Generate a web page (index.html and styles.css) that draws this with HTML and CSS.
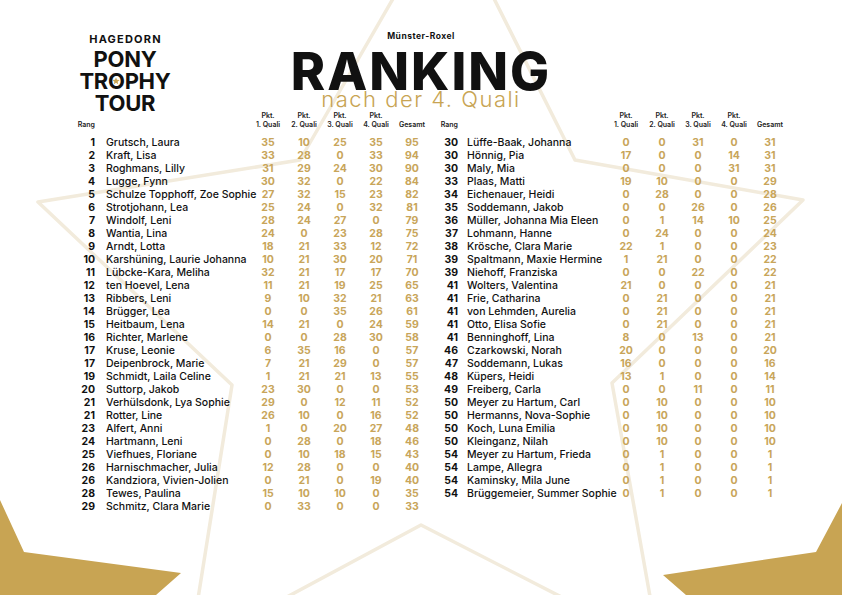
FILE: index.html
```html
<!DOCTYPE html>
<html lang="de">
<head>
<meta charset="utf-8">
<title>Ranking</title>
<link rel="stylesheet" href="styles.css">
</head>
<body>
<div class="page">
  <svg class="bg" viewBox="0 0 842 595" width="842" height="595" aria-hidden="true">
    <polygon class="outline" points="447,-95 575,160 803,200 612,383 659,647 421,525 190,649 232,385 38,202 300,160"/>
    <polygon class="gold" points="0,500 24,552 181,573 156,595 0,595"/>
    <polygon class="gold" points="842,503 816,552 663,575 686,595 842,595"/>
  </svg>

  <header class="header">
    <div class="logo">
      <div class="l1">HAGEDORN</div>
      <div class="l2">PONY</div>
      <div class="l2">TR<span class="o">O<svg class="ostar" viewBox="0 0 20 20"><polygon points="10,1 12.6,7 19,7.4 14,11.6 15.6,18 10,14.5 4.4,18 6,11.6 1,7.4 7.4,7"/></svg></span>PHY</div>
      <div class="l2">TOUR</div>
    </div>
    <div class="title">
      <div class="place">Münster-Roxel</div>
      <h1 class="rank">RANKING</h1>
      <div class="sub">nach der 4. Quali</div>
    </div>
    <div></div>
  </header>

  <main class="tables">
    <section class="tbl left">
      <div class="row head"><span class="rk">Rang</span><span></span><span class="n">Pkt.<br>1. Quali</span><span class="n">Pkt.<br>2. Quali</span><span class="n">Pkt.<br>3. Quali</span><span class="n">Pkt.<br>4. Quali</span><span class="n">Gesamt</span></div>
      <div class="row"><span class="rk">1</span><span class="nm">Grutsch, Laura</span><span class="n">35</span><span class="n">10</span><span class="n">25</span><span class="n">35</span><span class="n">95</span></div>
      <div class="row"><span class="rk">2</span><span class="nm">Kraft, Lisa</span><span class="n">33</span><span class="n">28</span><span class="n">0</span><span class="n">33</span><span class="n">94</span></div>
      <div class="row"><span class="rk">3</span><span class="nm">Roghmans, Lilly</span><span class="n">31</span><span class="n">29</span><span class="n">24</span><span class="n">30</span><span class="n">90</span></div>
      <div class="row"><span class="rk">4</span><span class="nm">Lugge, Fynn</span><span class="n">30</span><span class="n">32</span><span class="n">0</span><span class="n">22</span><span class="n">84</span></div>
      <div class="row"><span class="rk">5</span><span class="nm">Schulze Topphoff, Zoe Sophie</span><span class="n">27</span><span class="n">32</span><span class="n">15</span><span class="n">23</span><span class="n">82</span></div>
      <div class="row"><span class="rk">6</span><span class="nm">Strotjohann, Lea</span><span class="n">25</span><span class="n">24</span><span class="n">0</span><span class="n">32</span><span class="n">81</span></div>
      <div class="row"><span class="rk">7</span><span class="nm">Windolf, Leni</span><span class="n">28</span><span class="n">24</span><span class="n">27</span><span class="n">0</span><span class="n">79</span></div>
      <div class="row"><span class="rk">8</span><span class="nm">Wantia, Lina</span><span class="n">24</span><span class="n">0</span><span class="n">23</span><span class="n">28</span><span class="n">75</span></div>
      <div class="row"><span class="rk">9</span><span class="nm">Arndt, Lotta</span><span class="n">18</span><span class="n">21</span><span class="n">33</span><span class="n">12</span><span class="n">72</span></div>
      <div class="row"><span class="rk">10</span><span class="nm">Karshüning, Laurie Johanna</span><span class="n">10</span><span class="n">21</span><span class="n">30</span><span class="n">20</span><span class="n">71</span></div>
      <div class="row"><span class="rk">11</span><span class="nm">Lübcke-Kara, Meliha</span><span class="n">32</span><span class="n">21</span><span class="n">17</span><span class="n">17</span><span class="n">70</span></div>
      <div class="row"><span class="rk">12</span><span class="nm">ten Hoevel, Lena</span><span class="n">11</span><span class="n">21</span><span class="n">19</span><span class="n">25</span><span class="n">65</span></div>
      <div class="row"><span class="rk">13</span><span class="nm">Ribbers, Leni</span><span class="n">9</span><span class="n">10</span><span class="n">32</span><span class="n">21</span><span class="n">63</span></div>
      <div class="row"><span class="rk">14</span><span class="nm">Brügger, Lea</span><span class="n">0</span><span class="n">0</span><span class="n">35</span><span class="n">26</span><span class="n">61</span></div>
      <div class="row"><span class="rk">15</span><span class="nm">Heitbaum, Lena</span><span class="n">14</span><span class="n">21</span><span class="n">0</span><span class="n">24</span><span class="n">59</span></div>
      <div class="row"><span class="rk">16</span><span class="nm">Richter, Marlene</span><span class="n">0</span><span class="n">0</span><span class="n">28</span><span class="n">30</span><span class="n">58</span></div>
      <div class="row"><span class="rk">17</span><span class="nm">Kruse, Leonie</span><span class="n">6</span><span class="n">35</span><span class="n">16</span><span class="n">0</span><span class="n">57</span></div>
      <div class="row"><span class="rk">17</span><span class="nm">Deipenbrock, Marie</span><span class="n">7</span><span class="n">21</span><span class="n">29</span><span class="n">0</span><span class="n">57</span></div>
      <div class="row"><span class="rk">19</span><span class="nm">Schmidt, Laila Celine</span><span class="n">1</span><span class="n">21</span><span class="n">21</span><span class="n">13</span><span class="n">55</span></div>
      <div class="row"><span class="rk">20</span><span class="nm">Suttorp, Jakob</span><span class="n">23</span><span class="n">30</span><span class="n">0</span><span class="n">0</span><span class="n">53</span></div>
      <div class="row"><span class="rk">21</span><span class="nm">Verhülsdonk, Lya Sophie</span><span class="n">29</span><span class="n">0</span><span class="n">12</span><span class="n">11</span><span class="n">52</span></div>
      <div class="row"><span class="rk">21</span><span class="nm">Rotter, Line</span><span class="n">26</span><span class="n">10</span><span class="n">0</span><span class="n">16</span><span class="n">52</span></div>
      <div class="row"><span class="rk">23</span><span class="nm">Alfert, Anni</span><span class="n">1</span><span class="n">0</span><span class="n">20</span><span class="n">27</span><span class="n">48</span></div>
      <div class="row"><span class="rk">24</span><span class="nm">Hartmann, Leni</span><span class="n">0</span><span class="n">28</span><span class="n">0</span><span class="n">18</span><span class="n">46</span></div>
      <div class="row"><span class="rk">25</span><span class="nm">Viefhues, Floriane</span><span class="n">0</span><span class="n">10</span><span class="n">18</span><span class="n">15</span><span class="n">43</span></div>
      <div class="row"><span class="rk">26</span><span class="nm">Harnischmacher, Julia</span><span class="n">12</span><span class="n">28</span><span class="n">0</span><span class="n">0</span><span class="n">40</span></div>
      <div class="row"><span class="rk">26</span><span class="nm">Kandziora, Vivien-Jolien</span><span class="n">0</span><span class="n">21</span><span class="n">0</span><span class="n">19</span><span class="n">40</span></div>
      <div class="row"><span class="rk">28</span><span class="nm">Tewes, Paulina</span><span class="n">15</span><span class="n">10</span><span class="n">10</span><span class="n">0</span><span class="n">35</span></div>
      <div class="row"><span class="rk">29</span><span class="nm">Schmitz, Clara Marie</span><span class="n">0</span><span class="n">33</span><span class="n">0</span><span class="n">0</span><span class="n">33</span></div>
    </section>

    <section class="tbl right">
      <div class="row head"><span class="rk">Rang</span><span></span><span class="n">Pkt.<br>1. Quali</span><span class="n">Pkt.<br>2. Quali</span><span class="n">Pkt.<br>3. Quali</span><span class="n">Pkt.<br>4. Quali</span><span class="n">Gesamt</span></div>
      <div class="row"><span class="rk">30</span><span class="nm">Lüffe-Baak, Johanna</span><span class="n">0</span><span class="n">0</span><span class="n">31</span><span class="n">0</span><span class="n">31</span></div>
      <div class="row"><span class="rk">30</span><span class="nm">Hönnig, Pia</span><span class="n">17</span><span class="n">0</span><span class="n">0</span><span class="n">14</span><span class="n">31</span></div>
      <div class="row"><span class="rk">30</span><span class="nm">Maly, Mia</span><span class="n">0</span><span class="n">0</span><span class="n">0</span><span class="n">31</span><span class="n">31</span></div>
      <div class="row"><span class="rk">33</span><span class="nm">Plaas, Matti</span><span class="n">19</span><span class="n">10</span><span class="n">0</span><span class="n">0</span><span class="n">29</span></div>
      <div class="row"><span class="rk">34</span><span class="nm">Eichenauer, Heidi</span><span class="n">0</span><span class="n">28</span><span class="n">0</span><span class="n">0</span><span class="n">28</span></div>
      <div class="row"><span class="rk">35</span><span class="nm">Soddemann, Jakob</span><span class="n">0</span><span class="n">0</span><span class="n">26</span><span class="n">0</span><span class="n">26</span></div>
      <div class="row"><span class="rk">36</span><span class="nm">Müller, Johanna Mia Eleen</span><span class="n">0</span><span class="n">1</span><span class="n">14</span><span class="n">10</span><span class="n">25</span></div>
      <div class="row"><span class="rk">37</span><span class="nm">Lohmann, Hanne</span><span class="n">0</span><span class="n">24</span><span class="n">0</span><span class="n">0</span><span class="n">24</span></div>
      <div class="row"><span class="rk">38</span><span class="nm">Krösche, Clara Marie</span><span class="n">22</span><span class="n">1</span><span class="n">0</span><span class="n">0</span><span class="n">23</span></div>
      <div class="row"><span class="rk">39</span><span class="nm">Spaltmann, Maxie Hermine</span><span class="n">1</span><span class="n">21</span><span class="n">0</span><span class="n">0</span><span class="n">22</span></div>
      <div class="row"><span class="rk">39</span><span class="nm">Niehoff, Franziska</span><span class="n">0</span><span class="n">0</span><span class="n">22</span><span class="n">0</span><span class="n">22</span></div>
      <div class="row"><span class="rk">41</span><span class="nm">Wolters, Valentina</span><span class="n">21</span><span class="n">0</span><span class="n">0</span><span class="n">0</span><span class="n">21</span></div>
      <div class="row"><span class="rk">41</span><span class="nm">Frie, Catharina</span><span class="n">0</span><span class="n">21</span><span class="n">0</span><span class="n">0</span><span class="n">21</span></div>
      <div class="row"><span class="rk">41</span><span class="nm">von Lehmden, Aurelia</span><span class="n">0</span><span class="n">21</span><span class="n">0</span><span class="n">0</span><span class="n">21</span></div>
      <div class="row"><span class="rk">41</span><span class="nm">Otto, Elisa Sofie</span><span class="n">0</span><span class="n">21</span><span class="n">0</span><span class="n">0</span><span class="n">21</span></div>
      <div class="row"><span class="rk">41</span><span class="nm">Benninghoff, Lina</span><span class="n">8</span><span class="n">0</span><span class="n">13</span><span class="n">0</span><span class="n">21</span></div>
      <div class="row"><span class="rk">46</span><span class="nm">Czarkowski, Norah</span><span class="n">20</span><span class="n">0</span><span class="n">0</span><span class="n">0</span><span class="n">20</span></div>
      <div class="row"><span class="rk">47</span><span class="nm">Soddemann, Lukas</span><span class="n">16</span><span class="n">0</span><span class="n">0</span><span class="n">0</span><span class="n">16</span></div>
      <div class="row"><span class="rk">48</span><span class="nm">Küpers, Heidi</span><span class="n">13</span><span class="n">1</span><span class="n">0</span><span class="n">0</span><span class="n">14</span></div>
      <div class="row"><span class="rk">49</span><span class="nm">Freiberg, Carla</span><span class="n">0</span><span class="n">0</span><span class="n">11</span><span class="n">0</span><span class="n">11</span></div>
      <div class="row"><span class="rk">50</span><span class="nm">Meyer zu Hartum, Carl</span><span class="n">0</span><span class="n">10</span><span class="n">0</span><span class="n">0</span><span class="n">10</span></div>
      <div class="row"><span class="rk">50</span><span class="nm">Hermanns, Nova-Sophie</span><span class="n">0</span><span class="n">10</span><span class="n">0</span><span class="n">0</span><span class="n">10</span></div>
      <div class="row"><span class="rk">50</span><span class="nm">Koch, Luna Emilia</span><span class="n">0</span><span class="n">10</span><span class="n">0</span><span class="n">0</span><span class="n">10</span></div>
      <div class="row"><span class="rk">50</span><span class="nm">Kleinganz, Nilah</span><span class="n">0</span><span class="n">10</span><span class="n">0</span><span class="n">0</span><span class="n">10</span></div>
      <div class="row"><span class="rk">54</span><span class="nm">Meyer zu Hartum, Frieda</span><span class="n">0</span><span class="n">1</span><span class="n">0</span><span class="n">0</span><span class="n">1</span></div>
      <div class="row"><span class="rk">54</span><span class="nm">Lampe, Allegra</span><span class="n">0</span><span class="n">1</span><span class="n">0</span><span class="n">0</span><span class="n">1</span></div>
      <div class="row"><span class="rk">54</span><span class="nm">Kaminsky, Mila June</span><span class="n">0</span><span class="n">1</span><span class="n">0</span><span class="n">0</span><span class="n">1</span></div>
      <div class="row"><span class="rk">54</span><span class="nm">Brüggemeier, Summer Sophie</span><span class="n">0</span><span class="n">1</span><span class="n">0</span><span class="n">0</span><span class="n">1</span></div>
    </section>
  </main>
</div>
</body>
</html>
```
FILE: styles.css
```css
* { box-sizing: border-box; }
html, body { margin: 0; padding: 0; background: #ffffff; }
body { font-family: Inter, "Liberation Sans", sans-serif; color: #111111; }

.page {
  position: relative;
  width: 842px;
  height: 595px;
  overflow: hidden;
  background: #ffffff;
}

.bg {
  position: absolute;
  left: 0;
  top: 0;
  z-index: 0;
}
.bg .outline {
  fill: none;
  stroke: #f2ebdc;
  stroke-width: 3.5;
  stroke-linejoin: round;
}
.bg .gold { fill: #c8a453; }

.header {
  position: relative;
  z-index: 1;
  height: 111px;
  display: grid;
  grid-template-columns: 1fr auto 1fr;
}

.logo {
  margin-left: 78px;
  padding-top: 32px;
  width: 94px;
  text-align: center;
  font-weight: 700;
  color: #111111;
}
.logo .l1 {
  font-size: 11px;
  line-height: 15.5px;
  letter-spacing: 1.2px;
  margin-left: 1px;
}
.logo .l2 {
  font-size: 22px;
  line-height: 22px;
  letter-spacing: -0.3px;
  white-space: nowrap;
}
.logo .o { position: relative; }
.logo .ostar {
  position: absolute;
  left: 50%;
  top: 50%;
  width: 8px;
  height: 8px;
  margin-left: -4px;
  margin-top: -4px;
  fill: #c8a453;
}

.title {
  padding-top: 31px;
  text-align: center;
}
.place {
  font-size: 8.5px;
  font-weight: 700;
  letter-spacing: 0.5px;
  line-height: 10px;
}
.rank {
  margin: 5px 0 0 0;
  font-size: 52px;
  font-weight: 800;
  letter-spacing: 2px;
  line-height: 52px;
  color: #111111;
}
.sub {
  margin-top: -9px;
  font-size: 22px;
  font-weight: 300;
  letter-spacing: 1.5px;
  line-height: 20px;
  color: #c8a453;
}

.tables {
  position: relative;
  z-index: 1;
  display: flex;
  gap: 3px;
  padding-left: 70px;
}

.tbl .row {
  display: grid;
  align-items: center;
  height: 13px;
  white-space: nowrap;
}
.tbl.left .row { grid-template-columns: 25px 155px repeat(5, 36px); }
.tbl.right .row { grid-template-columns: 25px 150px repeat(5, 36px); }
.tbl.left .nm { padding-left: 11px; }
.tbl.right .nm { padding-left: 9px; }

.tbl .row.head {
  height: 18px;
  align-items: end;
  margin-bottom: 6.5px;
  font-size: 7px;
  line-height: 9px;
  font-weight: 600;
  color: #222222;
}
.tbl .row.head .n { color: #222222; font-weight: 600; font-size: 7px; }
.tbl .row.head .rk { font-size: 7px; font-weight: 600; }

.rk {
  text-align: right;
  font-size: 10.5px;
  font-weight: 700;
}
.nm {
  font-size: 10.5px;
  font-weight: 500;
  letter-spacing: 0;
  overflow: visible;
}
.n {
  text-align: center;
  font-size: 10.5px;
  font-weight: 700;
  color: #c8a55a;
}
```
